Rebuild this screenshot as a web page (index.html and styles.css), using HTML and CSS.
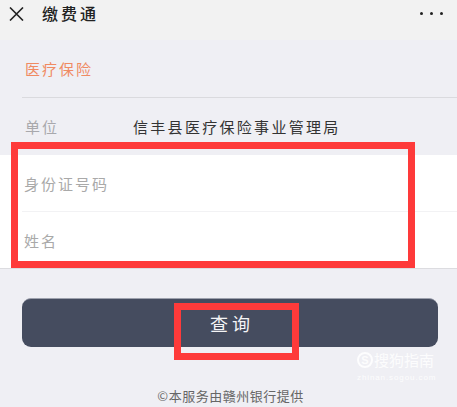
FILE: index.html
```html
<!DOCTYPE html>
<html lang="zh">
<head>
<meta charset="utf-8">
<link rel="stylesheet" href="styles.css">
</head>
<body>
<header class="topbar">
  <svg class="close" width="15" height="14" viewBox="0 0 15 14"><path d="M1 0.5 L14 13.5 M14 0.5 L1 13.5" stroke="#222" stroke-width="1.6" fill="none"/></svg>
  <span class="title">缴费通</span>
  <span class="dots"><i></i><i></i><i></i></span>
</header>
<div class="section-head">医疗保险</div>
<div class="divider"></div>
<div class="unit-row"><span class="label">单位</span><span class="value">信丰县医疗保险事业管理局</span></div>
<div class="form">
  <div class="form-row">身份证号码</div>
  <div class="divider light"></div>
  <div class="form-row">姓名</div>
  <div class="mark mark-form"></div>
</div>
<div class="btn-wrap">
  <div class="btn">查询</div>
  <div class="mark mark-btn"></div>
</div>
<footer class="footer">©本服务由赣州银行提供</footer>
<div class="watermark">
  <div class="wm-top"><span class="wm-logo">S</span><span>搜狗指南</span></div>
  <div class="wm-url">zhinan.sogou.com</div>
</div>
</body>
</html>
```
FILE: styles.css
```css
html, body {
  margin: 0;
  padding: 0;
}
body {
  background: #efeff4;
  font-family: "Noto Sans CJK SC", "Noto Sans", sans-serif;
  width: 457px;
  height: 407px;
  overflow: hidden;
  position: relative;
}
.topbar {
  height: 40px;
  box-sizing: border-box;
  padding: 6px 0 0 9px;
  display: flex;
  align-items: flex-start;
  background: #f2f2f2;
}
.close {
  margin-top: 1px;
  flex: none;
}
.title {
  margin-left: 18px;
  font-size: 16px;
  line-height: 15px;
  height: 15px;
  letter-spacing: 3px;
  color: #222;
  font-weight: 500;
}
.dots {
  margin-left: auto;
  margin-right: 14px;
  margin-top: 6px;
  display: flex;
  gap: 7px;
}
.dots i {
  display: block;
  width: 3px;
  height: 3px;
  border-radius: 50%;
  background: #222;
}
.section-head {
  height: 57px;
  line-height: 57px;
  padding-left: 25px;
  color: #f08a62;
  font-size: 15px;
  letter-spacing: 2px;
}
.divider {
  height: 1px;
  margin-left: 22px;
  background: #dadade;
}
.divider.light {
  background: #f2f2f4;
}
.unit-row {
  height: 57px;
  display: flex;
  align-items: center;
  padding-left: 25px;
  font-size: 15px;
  letter-spacing: 2px;
}
.label {
  width: 108px;
  color: #a8a8ac;
}
.value {
  color: #333;
  letter-spacing: 2.3px;
}
.form {
  position: relative;
  background: #fff;
  border-bottom: 1px solid #dcdce0;
}
.form-row {
  height: 56px;
  display: flex;
  align-items: center;
  padding-left: 24px;
  color: #a9a9a9;
  font-size: 15px;
  letter-spacing: 2px;
}
.mark {
  position: absolute;
  box-sizing: border-box;
  border: 7px solid #fe3a3a;
}
.mark-form {
  left: 11px;
  top: -13px;
  width: 404px;
  height: 126px;
}
.btn-wrap {
  position: relative;
  margin: 29px 19px 0 22px;
}
.btn {
  height: 49px;
  border-radius: 9px;
  background: #454c5f;
  border-top: 1px solid #9da1ad;
  box-sizing: border-box;
  color: #f4f4f6;
  font-size: 18px;
  letter-spacing: 4px;
  display: flex;
  align-items: center;
  justify-content: center;
  padding-left: 4px;
}
.mark-btn {
  left: 152px;
  top: 5px;
  width: 125px;
  height: 57px;
}
.footer {
  margin-top: 39px;
  line-height: 20px;
  text-align: center;
  padding-left: 4px;
  color: #666;
  font-size: 13px;
  letter-spacing: 0.5px;
}
.watermark {
  position: absolute;
  left: 357px;
  top: 350px;
  color: rgba(255, 255, 255, 0.85);
}
.wm-top {
  display: flex;
  align-items: center;
  gap: 1px;
  font-size: 15px;
  line-height: 20px;
}
.wm-logo {
  width: 16px;
  height: 16px;
  border-radius: 50%;
  border: 2px solid rgba(255, 255, 255, 0.85);
  box-sizing: border-box;
  font-size: 11px;
  line-height: 12px;
  text-align: center;
  font-weight: bold;
  font-family: "Liberation Sans", sans-serif;
}
.wm-url {
  margin-top: 4px;
  font-size: 8px;
  line-height: 8px;
  letter-spacing: 0.9px;
  font-family: "Liberation Sans", sans-serif;
}
```
